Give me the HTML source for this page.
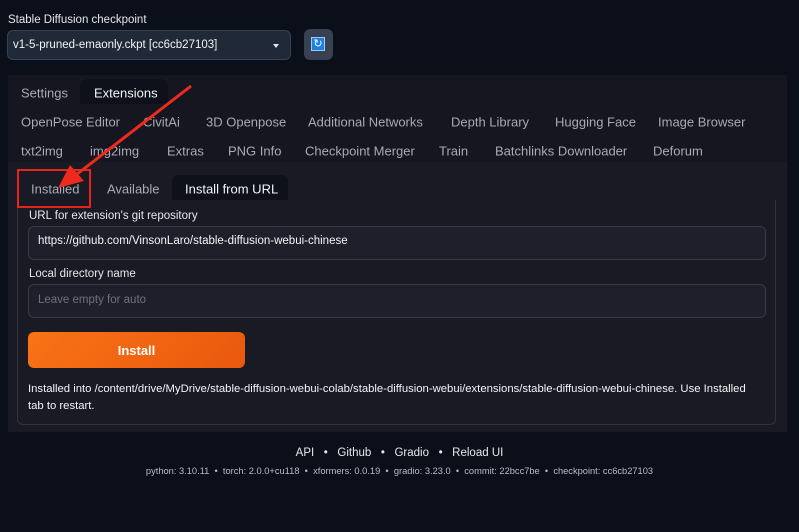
<!DOCTYPE html><html><head><style>
*{margin:0;padding:0;box-sizing:border-box}
body{width:799px;height:532px;background:#0b0f19;font-family:"Liberation Sans",sans-serif;color:#d1d5db;position:relative;overflow:hidden}
.a{position:absolute;white-space:nowrap}
.t{font-size:13px;color:#a7abb3;transform:translateY(-50%)}
.w{color:#f3f4f6}
</style></head><body>
<div class="a" style="left:8px;top:14px;font-size:11.5px;color:#e5e7eb">Stable Diffusion checkpoint</div>
<div class="a" style="left:7px;top:30px;width:284px;height:30px;background:#1f2937;border:1px solid #374151;border-radius:6px"></div>
<div class="a" style="left:13px;top:39px;font-size:11.5px;color:#f3f4f6">v1-5-pruned-emaonly.ckpt [cc6cb27103]</div>
<div class="a" style="left:273px;top:44px;width:0;height:0;border-left:3.5px solid transparent;border-right:3.5px solid transparent;border-top:4px solid #e5e7eb"></div>
<div class="a" style="left:304px;top:29px;width:29px;height:31px;background:#374151;border-radius:6px"></div>
<div class="a" style="left:311px;top:37px;width:14px;height:14px;background:#1e7fe0;border:1px solid #9cc9f5;color:#fff;font-size:11px;line-height:12px;text-align:center">↻</div>
<div class="a" style="left:8px;top:75px;width:779px;height:357px;background:#1a1a24"></div>
<div class="a" style="left:8px;top:75px;width:779px;height:87px;background:#15161f"></div>
<div class="a" style="left:80px;top:79px;width:88px;height:25px;background:#0f111a;border-radius:6px 6px 0 0"></div>
<div class="a t" style="left:21px;top:93px">Settings</div>
<div class="a t w" style="left:94px;top:93px">Extensions</div>
<div class="a t" style="left:21px;top:122px">OpenPose Editor</div>
<div class="a t" style="left:143px;top:122px">CivitAi</div>
<div class="a t" style="left:206px;top:122px">3D Openpose</div>
<div class="a t" style="left:308px;top:122px">Additional Networks</div>
<div class="a t" style="left:451px;top:122px">Depth Library</div>
<div class="a t" style="left:555px;top:122px">Hugging Face</div>
<div class="a t" style="left:658px;top:122px">Image Browser</div>
<div class="a t" style="left:21px;top:151px">txt2img</div>
<div class="a t" style="left:90px;top:151px">img2img</div>
<div class="a t" style="left:167px;top:151px">Extras</div>
<div class="a t" style="left:228px;top:151px">PNG Info</div>
<div class="a t" style="left:305px;top:151px">Checkpoint Merger</div>
<div class="a t" style="left:439px;top:151px">Train</div>
<div class="a t" style="left:495px;top:151px">Batchlinks Downloader</div>
<div class="a t" style="left:653px;top:151px">Deforum</div>
<div class="a" style="left:172px;top:175px;width:116px;height:26px;background:#0f111a;border-radius:6px 6px 0 0"></div>
<div class="a t" style="left:31px;top:189px">Installed</div>
<div class="a t" style="left:107px;top:189px">Available</div>
<div class="a t w" style="left:185px;top:189px">Install from URL</div>
<div class="a" style="left:17px;top:200px;width:759px;height:225px;border:1px solid #2f3240;border-top:none;border-radius:0 0 6px 6px;background:#1a1a24"></div>
<div class="a" style="left:29px;top:210px;font-size:11.5px;color:#e5e7eb">URL for extension's git repository</div>
<div class="a" style="left:28px;top:226px;width:738px;height:34px;background:#1f1f2c;border:1px solid #373a48;border-radius:6px"></div>
<div class="a" style="left:38px;top:235px;font-size:11.5px;color:#f3f4f6">https://github.com/VinsonLaro/stable-diffusion-webui-chinese</div>
<div class="a" style="left:29px;top:268px;font-size:11.5px;color:#e5e7eb">Local directory name</div>
<div class="a" style="left:28px;top:284px;width:738px;height:34px;background:#1f1f2c;border:1px solid #373a48;border-radius:6px"></div>
<div class="a" style="left:38px;top:294px;font-size:11.5px;color:#6b7280">Leave empty for auto</div>
<div class="a" style="left:28px;top:332px;width:217px;height:36px;background:linear-gradient(135deg,#f97316,#ea580c);border-radius:6px;color:#fff;font-size:13px;font-weight:bold;text-align:center;line-height:37px">Install</div>
<div class="a" style="left:28px;top:381px;font-size:11.3px;line-height:17px;color:#f3f4f6;white-space:normal;width:730px">Installed into /content/drive/MyDrive/stable-diffusion-webui-colab/stable-diffusion-webui/extensions/stable-diffusion-webui-chinese. Use Installed tab to restart.</div>
<div class="a" style="left:0;width:799px;top:447px;text-align:center;font-size:11.5px;color:#e5e7eb">API &nbsp;&nbsp;•&nbsp;&nbsp; Github &nbsp;&nbsp;•&nbsp;&nbsp; Gradio &nbsp;&nbsp;•&nbsp;&nbsp; Reload UI</div>
<div class="a" style="left:0;width:799px;top:466px;text-align:center;font-size:9.3px;color:#b8bcc4">python: 3.10.11 &nbsp;•&nbsp; torch: 2.0.0+cu118 &nbsp;•&nbsp; xformers: 0.0.19 &nbsp;•&nbsp; gradio: 3.23.0 &nbsp;•&nbsp; commit: 22bcc7be &nbsp;•&nbsp; checkpoint: cc6cb27103</div>
<div class="a" style="left:17px;top:169px;width:74px;height:39px;border:2px solid #e5251c"></div>
<svg class="a" style="left:0;top:0" width="799" height="532"><line x1="191" y1="86" x2="72" y2="178" stroke="#ee2a1f" stroke-width="3"/><polygon points="58,188 70,165 84,181" fill="#ee2a1f"/></svg>
</body></html>
